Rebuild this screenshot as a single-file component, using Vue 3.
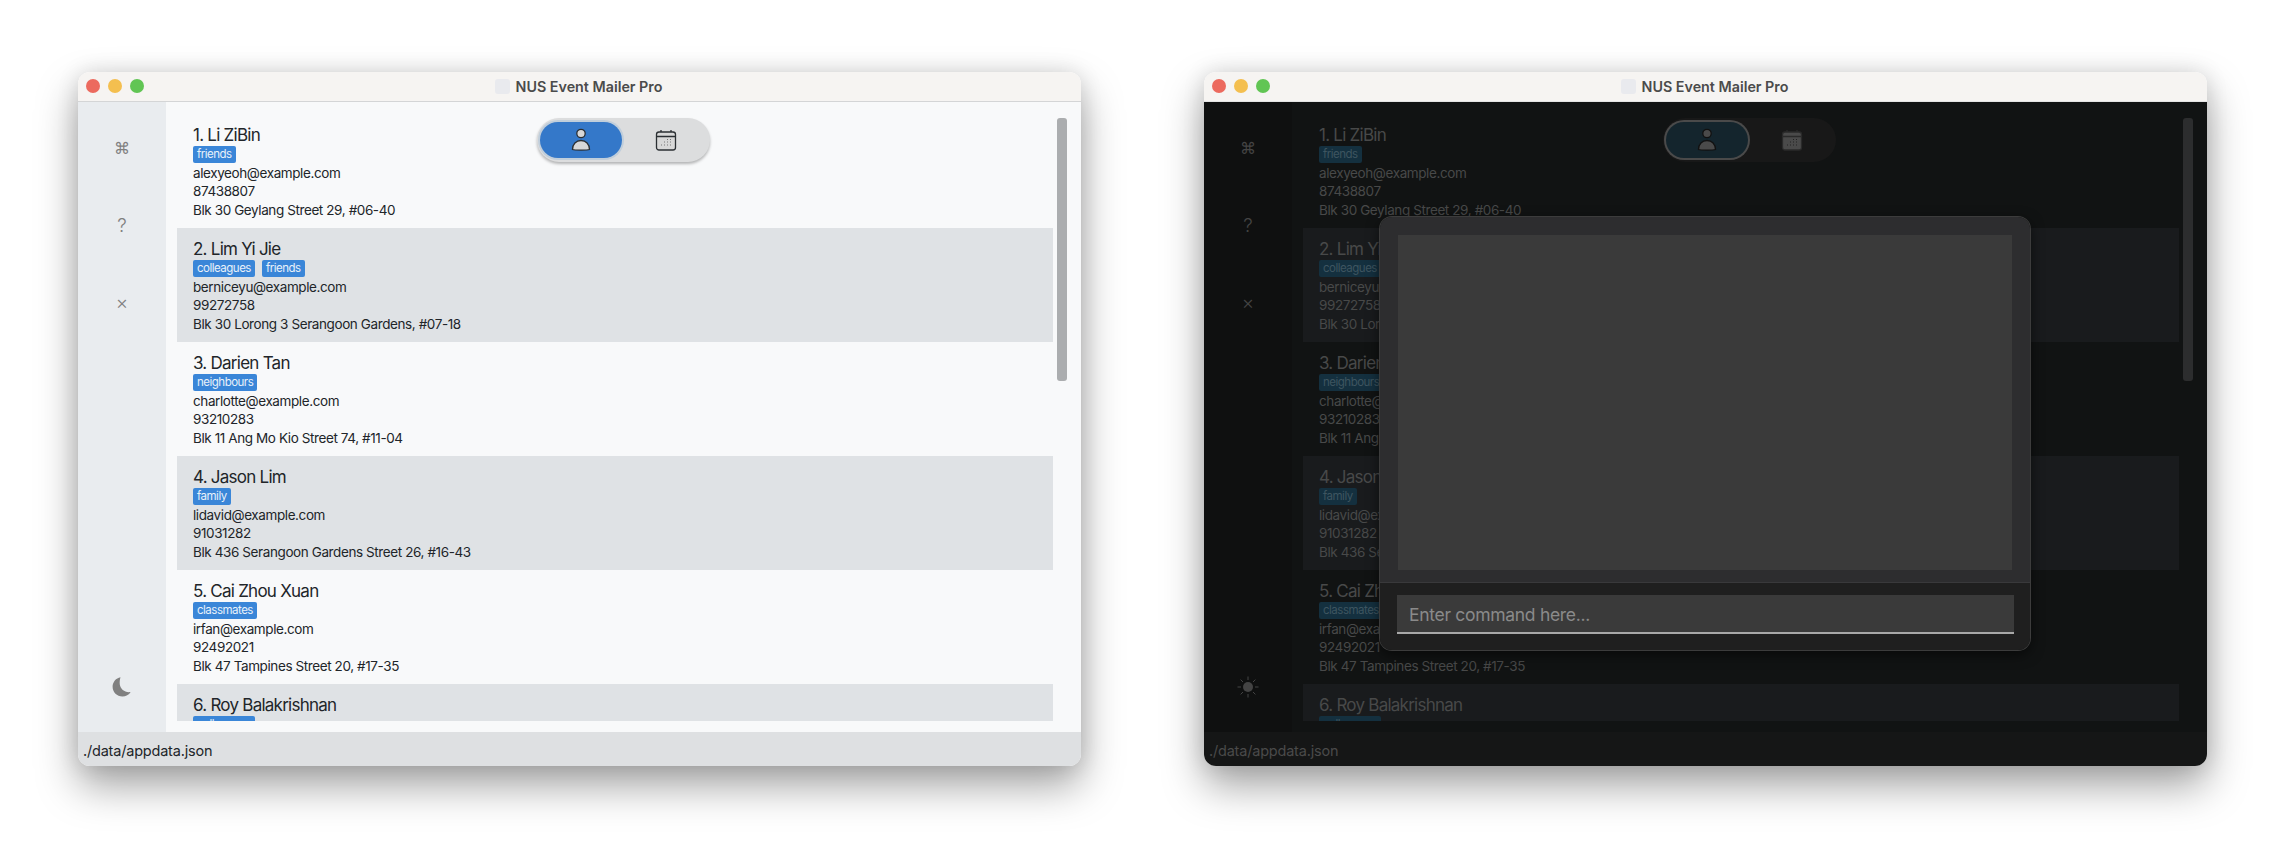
<script setup>
const themes = ['light', 'dark']

// the sixth row is cut off by the list, only its name and tag show
const people = [
  { name: '1. Li ZiBin', tags: ['friends'], lines: ['alexyeoh@example.com', '87438807', 'Blk 30 Geylang Street 29, #06-40'] },
  { name: '2. Lim Yi Jie', tags: ['colleagues', 'friends'], lines: ['berniceyu@example.com', '99272758', 'Blk 30 Lorong 3 Serangoon Gardens, #07-18'] },
  { name: '3. Darien Tan', tags: ['neighbours'], lines: ['charlotte@example.com', '93210283', 'Blk 11 Ang Mo Kio Street 74, #11-04'] },
  { name: '4. Jason Lim', tags: ['family'], lines: ['lidavid@example.com', '91031282', 'Blk 436 Serangoon Gardens Street 26, #16-43'] },
  { name: '5. Cai Zhou Xuan', tags: ['classmates'], lines: ['irfan@example.com', '92492021', 'Blk 47 Tampines Street 20, #17-35'] },
  { name: '6. Roy Balakrishnan', tags: ['colleagues'], lines: [] }
]
</script>

<template>
  <div class="desktop">
    <div v-for="theme in themes" :key="theme" :class="['window', theme]">
      <!-- Title bar -->
      <div class="titlebar">
        <div class="lights">
          <span class="dot red"></span>
          <span class="dot yellow"></span>
          <span class="dot green"></span>
        </div>
        <span class="app-icon"></span>
        <span class="title">NUS Event Mailer Pro</span>
      </div>

      <div class="body">
        <!-- Sidebar -->
        <div class="sidebar">
          <div class="side-btn cmd">⌘</div>
          <div class="side-btn">?</div>
          <div class="side-btn">×</div>
          <div class="side-btn bottom">
            <svg v-if="theme === 'light'" width="24" height="24" viewBox="0 0 24 24">
              <path d="M10.5 2.2C6 3 2.6 7 2.6 11.8c0 5.4 4.4 9.8 9.8 9.8 3.4 0 6.6-1.8 8.2-4.6-5.4 1-10.1-2.6-10.8-7.4-.3-2.6 0-5 .7-7.4z" fill="currentColor" />
            </svg>
            <svg v-else width="24" height="24" viewBox="0 0 24 24" stroke="currentColor" stroke-width="1">
              <circle cx="12" cy="12" r="5" fill="currentColor" stroke="none" />
              <path d="M12 1.5v3.5M12 19v3.5M1.5 12H5M19 12h3.5M4.6 4.6l2.4 2.4M17 17l2.4 2.4M4.6 19.4L7 17M17 7l2.4-2.4" fill="none" />
            </svg>
          </div>
        </div>

        <!-- Person list -->
        <div class="main">
          <div class="list">
            <div v-for="(person, i) in people" :key="person.name" :class="['row', { alt: i % 2 === 1 }]">
              <div class="name">{{ person.name }}</div>
              <div class="tags">
                <span v-for="tag in person.tags" :key="tag" class="tag">{{ tag }}</span>
              </div>
              <div v-for="line in person.lines" :key="line" class="line">{{ line }}</div>
            </div>
          </div>
          <div class="scrollbar"></div>
        </div>
      </div>

      <div class="status">./data/appdata.json</div>

      <!-- Contacts / events switch -->
      <div class="toggle">
        <div class="pill">
          <svg width="24" height="26" viewBox="0 0 24 26" class="icon">
            <circle cx="12" cy="6.5" r="4.2" />
            <path d="M3.5 22.5c0-5.5 3.6-9 8.5-9s8.5 3.5 8.5 9c-2 .8-15 .8-17 0z" />
          </svg>
        </div>
        <div class="pill-off">
          <svg width="24" height="24" viewBox="0 0 24 24" class="icon cal">
            <rect x="2.5" y="4" width="19" height="18" rx="2.5" />
            <path d="M2.5 8.5h19M7 2v2M17 2v2" fill="none" />
            <path d="M7 17h1M10 17h1M13 17h1M10 14h1M13 14h1M16 14h1M16 11.5h1M13 11.5h1M16 17h1" class="dots" fill="none" />
          </svg>
        </div>
      </div>

      <!-- Command box -->
      <div v-if="theme === 'dark'" class="modal">
        <div class="modal-top">
          <div class="result"></div>
        </div>
        <div class="modal-bottom">
          <div class="input">Enter command here...</div>
        </div>
      </div>
    </div>
  </div>
</template>

<style>
html,
body {
  background: #fff;
}
</style>

<style scoped>
.desktop {
  display: flex;
  gap: 123px;
  width: 2286px;
  height: 842px;
  padding: 72px 0 0 78px;
  box-sizing: border-box;
  overflow: hidden;
  background: #fff;
  font-family: Inter, "Liberation Sans", sans-serif;
}
.window {
  position: relative;
  display: flex;
  flex-direction: column;
  flex: 0 0 1003px;
  height: 694px;
  border-radius: 12px;
  box-shadow: 0 20px 42px rgba(0, 0, 0, 0.36), 0 0 22px rgba(0, 0, 0, 0.12);
}
.titlebar {
  position: relative;
  display: flex;
  align-items: center;
  justify-content: center;
  height: 30px;
  padding-right: 2px;
  box-sizing: border-box;
  background: #f6f4f2;
  border-radius: 12px 12px 0 0;
  border-bottom: 1px solid #d4d5d6;
  gap: 6px;
}
.dark .titlebar {
  border-bottom-color: #e4e4e4;
}
.lights {
  position: absolute;
  left: 8px;
  top: 7px;
  display: flex;
  gap: 8px;
}
.dot {
  width: 14px;
  height: 14px;
  border-radius: 50%;
}
.red { background: #ec6a5e; }
.yellow { background: #f4bf4f; }
.green { background: #61c554; }
.app-icon {
  width: 15px;
  height: 15px;
  border-radius: 3px;
  background: #e9eaee;
}
.title {
  font-size: 14.3px;
  font-weight: 600;
  color: #4b4b4b;
}
.body {
  display: flex;
  height: 630px;
}
.sidebar {
  display: flex;
  flex-direction: column;
  flex: 0 0 88px;
  padding: 8px 0 7px;
  box-sizing: border-box;
  background: #e9ecef;
  color: #808080;
}
.dark .sidebar {
  background: #0f1010;
  color: #444;
}
.side-btn {
  display: flex;
  align-items: center;
  justify-content: center;
  height: 77px;
  font-size: 19px;
  font-weight: 300;
  line-height: 1;
}
.side-btn.cmd {
  font-family: "DejaVu Sans", sans-serif;
  font-size: 16px;
}
.side-btn.bottom {
  margin-top: auto;
}
.main {
  position: relative;
  flex: 1;
  min-width: 0;
  padding: 12px 28px 11px 11px;
  background: #f8f9fa;
}
.dark .main {
  background: #111313;
}
.list {
  height: 100%;
  overflow: hidden;
}
.row {
  height: 114px;
  padding: 11px 16px 0;
  box-sizing: border-box;
  color: #212529;
}
.row.alt {
  background: #dfe2e5;
}
.dark .row {
  color: #484949;
}
.dark .row.alt {
  background: #191b1d;
}
.name {
  font-size: 17px;
  line-height: 21px;
  letter-spacing: -0.75px;
}
.tags {
  display: flex;
  gap: 7px;
  height: 17.5px;
}
.tag {
  height: 17px;
  padding: 0 4px;
  border-radius: 2px;
  background: #3a86d8;
  color: #e8f1fa;
  font-size: 11.5px;
  line-height: 17px;
  letter-spacing: -0.5px;
}
.dark .tag {
  background: #14303f;
  color: #3e5560;
}
.line {
  font-size: 13.5px;
  line-height: 18.5px;
  letter-spacing: -0.4px;
}
.scrollbar {
  position: absolute;
  top: 16px;
  right: 14px;
  width: 10px;
  height: 263px;
  border-radius: 3px;
  background: #abadaf;
}
.dark .scrollbar {
  background: #2c2d2e;
}
.status {
  height: 34px;
  padding-left: 5px;
  background: #dee0e2;
  border-radius: 0 0 12px 12px;
  color: #212529;
  font-size: 14.5px;
  line-height: 37px;
  letter-spacing: -0.2px;
}
.dark .status {
  background: #151616;
  color: #4a4a4a;
}
.toggle {
  position: absolute;
  left: 459px;
  top: 46px;
  display: flex;
  align-items: center;
  width: 173px;
  height: 44px;
  padding-left: 3px;
  box-sizing: border-box;
  border-radius: 22px;
  background: #dcddde;
  box-shadow: 0 2px 3px rgba(0, 0, 0, 0.28);
}
.dark .toggle {
  background: #181818;
  box-shadow: none;
}
.pill {
  display: flex;
  align-items: center;
  justify-content: center;
  width: 82px;
  height: 36px;
  border-radius: 18px;
  background: #3478c9;
  box-shadow: 0 0 0 2px #c0cedb;
}
.dark .pill {
  background: #14252d;
  box-shadow: 0 0 0 2px #4a4a4a;
}
.pill-off {
  display: flex;
  align-items: center;
  justify-content: center;
  width: 88px;
}
.icon {
  fill: #d8d8d8;
  stroke: #2b2f33;
  stroke-width: 1.3;
}
.icon .dots {
  stroke: #777;
  stroke-width: 1.2;
}
.dark .icon {
  fill: #4a4a4a;
  stroke: #111;
}
.dark .icon.cal {
  stroke: #2a2a2a;
}
.dark .icon .dots {
  stroke: #222;
}
.modal {
  position: absolute;
  left: 176px;
  top: 145px;
  display: flex;
  flex-direction: column;
  width: 650px;
  height: 433px;
  border-radius: 12px;
  overflow: hidden;
  box-shadow: 0 0 0 1px #3c3c3c, 0 4px 14px rgba(0, 0, 0, 0.6);
}
.modal-top {
  height: 366px;
  padding: 18px 18px 12px;
  box-sizing: border-box;
  background: #2d2d2f;
  border-bottom: 1px solid #39393b;
}
.result {
  height: 100%;
  background: #3a3a3a;
}
.modal-bottom {
  flex: 1;
  padding: 12px 16px 0 17px;
  background: #1f1f1f;
}
.input {
  height: 39px;
  padding-left: 12px;
  box-sizing: border-box;
  background: #3a3a3a;
  border-bottom: 2px solid #a8a8a8;
  color: #8a8a8a;
  font-size: 17.5px;
  line-height: 39px;
  letter-spacing: -0.3px;
}
</style>
